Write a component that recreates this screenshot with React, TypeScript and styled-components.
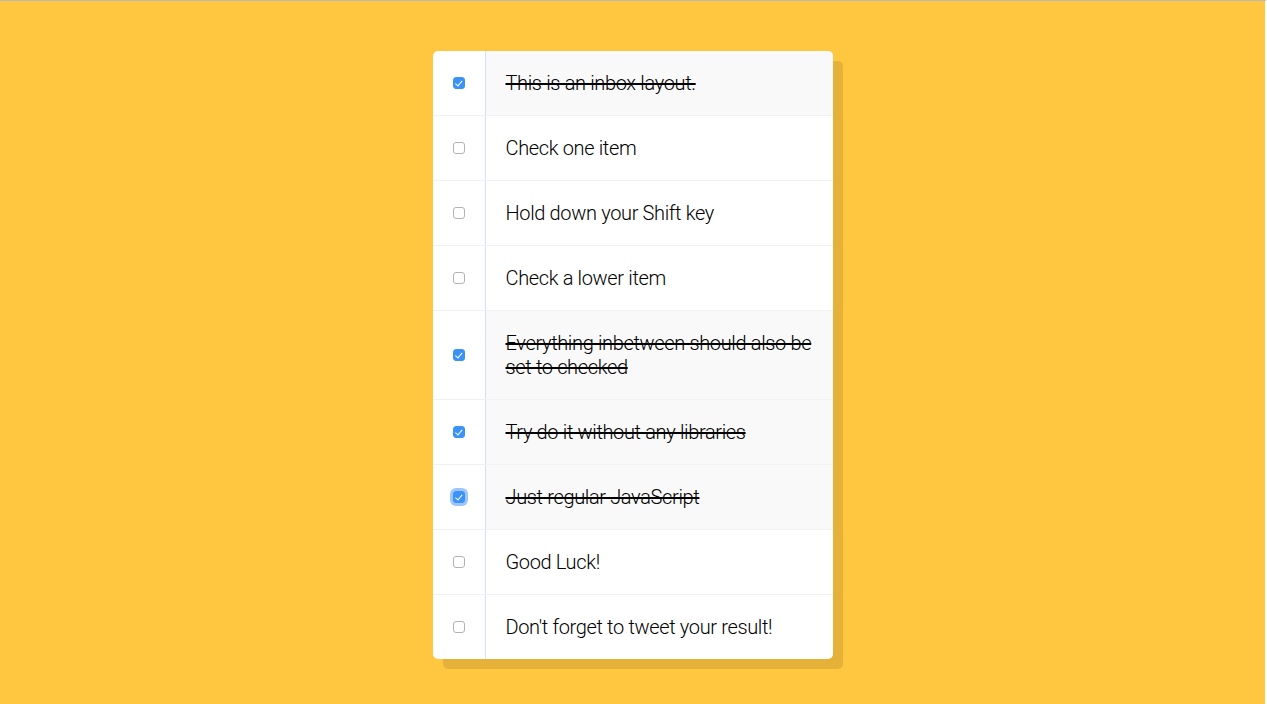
import React, { useState } from "react";
import styled, { createGlobalStyle, css } from "styled-components";

const Global = createGlobalStyle`
  html, body { margin: 0; padding: 0; }
  html { background: #ffc640; }
  body {
    min-height: 704px;
    box-sizing: border-box;
    border-top: 1px solid #b9b9b9;
    border-right: 2px solid #ffffff;
    font-family: "Liberation Sans", Arial, sans-serif;
  }
  #root { padding-top: 50px; padding-bottom: 1px; }
`;

const Inbox = styled.div`
  max-width: 400px;
  margin: 0 auto;
  background: #ffffff;
  border-radius: 5px;
  box-shadow: 10px 10px 0 rgba(0, 0, 0, 0.1);
  overflow: hidden;
`;

const Item = styled.label`
  display: flex;
  align-items: center;
  border-bottom: 1px solid #f1f1f1;
  &:last-child { border-bottom: 0; }
`;

const Box = styled.input<{ $focus?: boolean }>`
  appearance: none;
  -webkit-appearance: none;
  box-sizing: border-box;
  width: 12px;
  height: 12px;
  margin: 20px 20px 20px 20px;
  border: 1px solid #b3b3b3;
  border-radius: 3px;
  background: #ffffff;
  position: relative;
  flex: none;
  outline: none;
  &:checked {
    background: #3b93f8;
    border-color: #3b93f8;
  }
  &:checked::after {
    content: "";
    position: absolute;
    left: 3.5px;
    top: 1px;
    width: 2.5px;
    height: 5.5px;
    border: solid #ffffff;
    border-width: 0 1.6px 1.6px 0;
    transform: rotate(40deg);
  }
  ${(p) =>
    p.$focus &&
    css`
      box-shadow: 0 0 0 3px rgba(90, 160, 250, 0.6);
    `}
`;

const Text = styled.p<{ $done: boolean }>`
  margin: 0;
  padding: 20px;
  flex: 1;
  font-family: Roboto, "Liberation Sans", Arial, sans-serif;
  font-size: 20px;
  font-weight: 300;
  letter-spacing: -0.35px;
  line-height: 24px;
  color: #000000;
  border-left: 1px solid #d1e2ff;
  ${(p) =>
    p.$done &&
    css`
      background: #f9f9f9;
      text-decoration: line-through;
      text-decoration-thickness: 2px;
    `}
`;

const initial = [
  { text: "This is an inbox layout.", done: true },
  { text: "Check one item", done: false },
  { text: "Hold down your Shift key", done: false },
  { text: "Check a lower item", done: false },
  { text: "Everything inbetween should also be set to checked", done: true },
  { text: "Try do it without any libraries", done: true },
  { text: "Just regular JavaScript", done: true },
  { text: "Good Luck!", done: false },
  { text: "Don't forget to tweet your result!", done: false },
];

export default function App() {
  const [items, setItems] = useState(initial);
  const toggle = (i: number) =>
    setItems((arr) => arr.map((it, j) => (j === i ? { ...it, done: !it.done } : it)));
  return (
    <>
      <Global />
      <Inbox>
        {items.map((it, i) => (
          <Item key={i}>
            <Box
              type="checkbox"
              checked={it.done}
              $focus={i === 6}
              onChange={() => toggle(i)}
            />
            <Text $done={it.done}>{it.text}</Text>
          </Item>
        ))}
      </Inbox>
    </>
  );
}
